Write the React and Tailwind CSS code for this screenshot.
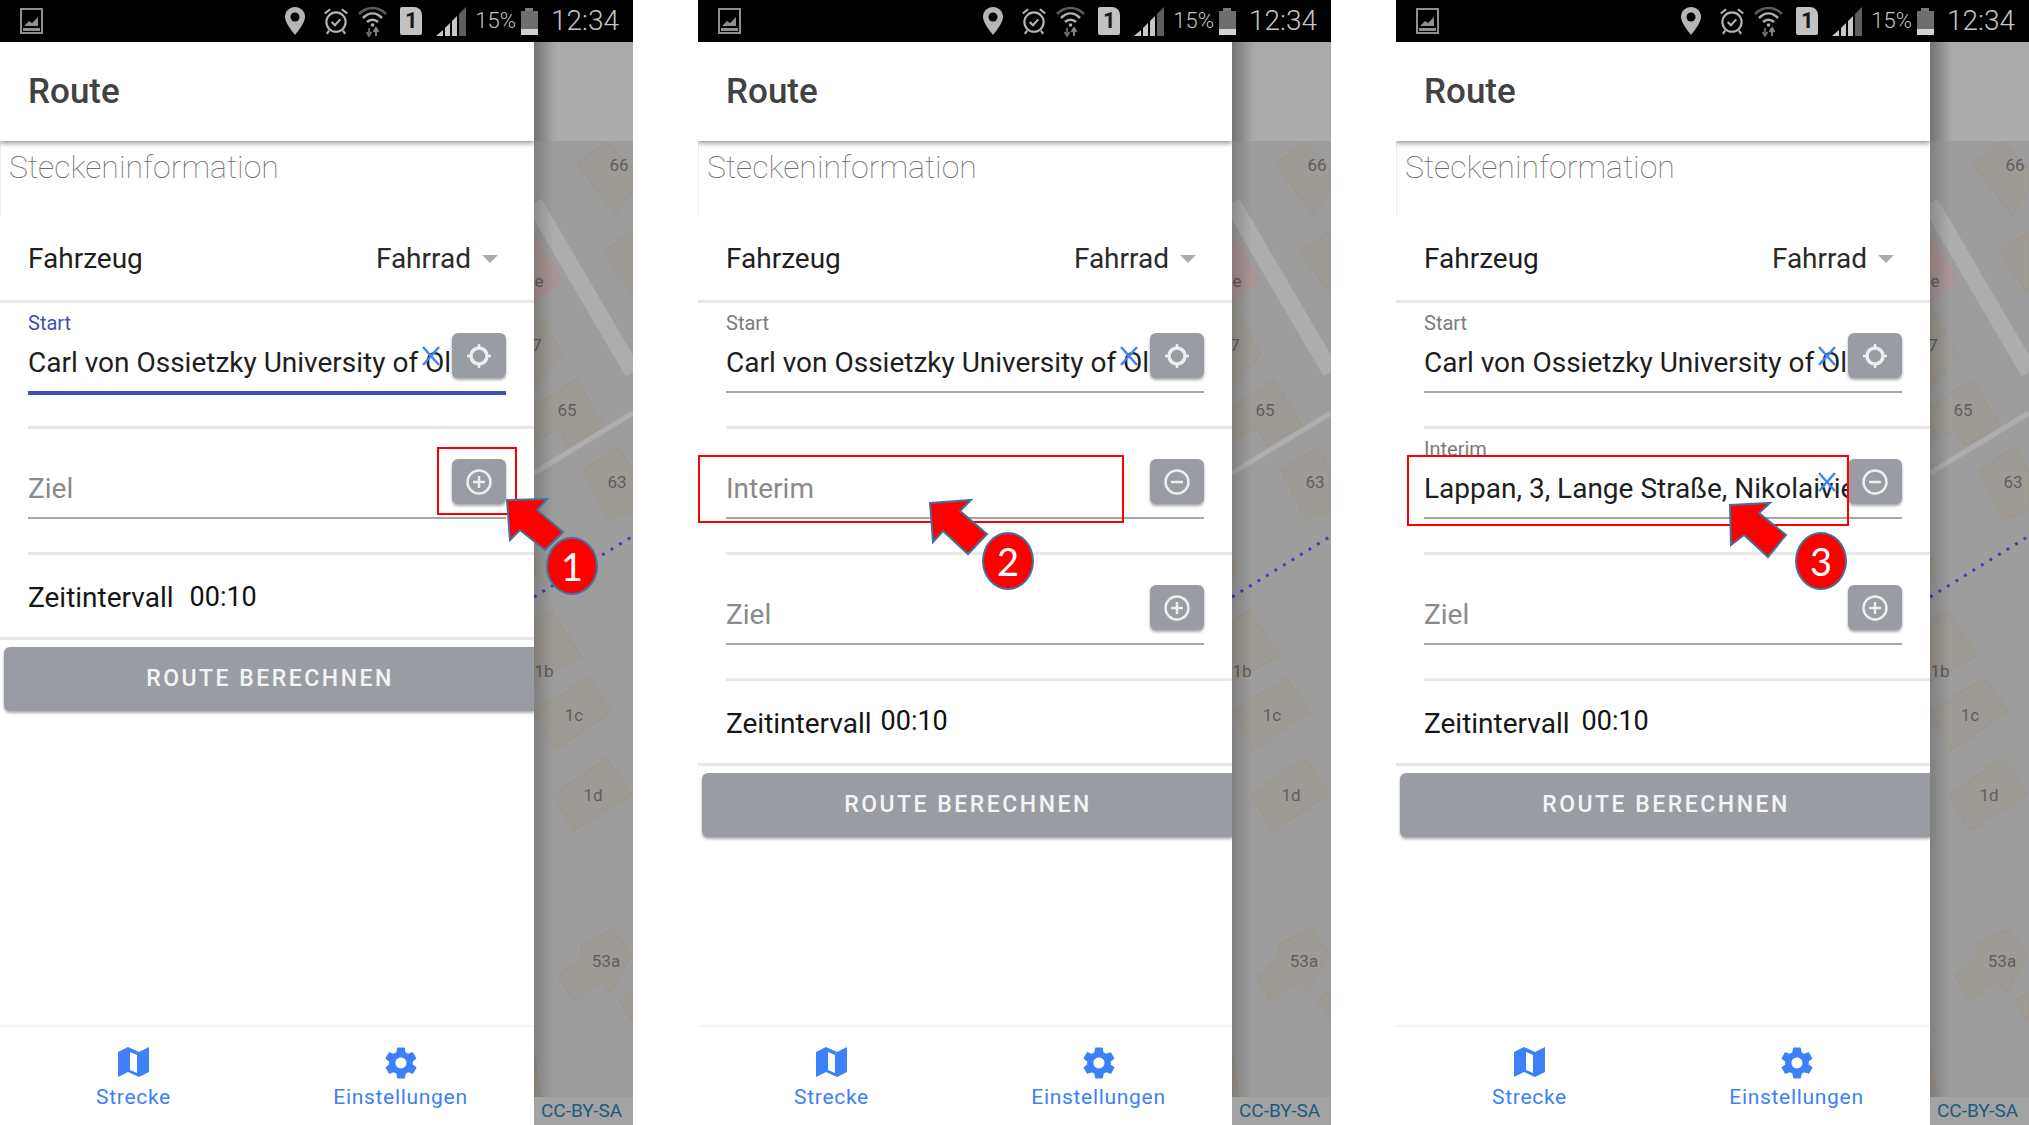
import React from "react";
import { IoMdSettings } from "react-icons/io";

const FONT = "font-[Roboto,sans-serif]";

function ImageIcon() {
  return (
    <svg width="23" height="26" viewBox="0 0 23 26" className="ml-5 shrink-0">
      <rect x="1" y="1" width="21" height="24" fill="none" stroke="#8f8f8f" strokeWidth="2" />
      <rect x="3" y="20" width="17" height="3" fill="#8f8f8f" />
      <path d="M4 18 L9 13 L12 15 L18 9 L18 18 Z" fill="#8f8f8f" />
    </svg>
  );
}

function StatusIcons() {
  return (
    <div className="ml-auto flex items-center pr-[14px] text-[#c4c4c4]">
      <svg width="20" height="28" viewBox="0 0 20 28">
        <path d="M10 0C4.5 0 0 4.4 0 9.8 0 16.5 10 28 10 28s10-11.500 10-18.200C20 4.400 15.500 0 10 0z" fill="#b5b5b5" />
        <circle cx="10" cy="10" r="4.500" fill="#000" />
      </svg>
      <svg width="26" height="30" viewBox="0 0 23 28" className="ml-[18px]" fill="none" stroke="#b5b5b5" strokeWidth="2">
        <circle cx="11.500" cy="15" r="9" />
        <path d="M7.500 15l3 3 5-5.500" />
        <path d="M1 7l5-4M22 7l-5-4M5 23l-2 3M18 23l2 3" />
      </svg>
      <svg width="29" height="32" viewBox="0 0 29 32" className="ml-[9px]" fill="none">
        <path d="M1 9C9 1 20 1 28 9" stroke="#5c5c5c" strokeWidth="2.500" />
        <path d="M5 13C11 7 18 7 24 13" stroke="#b0b0b0" strokeWidth="2.500" />
        <path d="M9 17C12 14 17 14 20 17" stroke="#b0b0b0" strokeWidth="2.500" />
        <circle cx="14.500" cy="20" r="1.800" fill="#b0b0b0" />
        <path d="M11 23v8M8.500 27l2.500 4 2.500-4" stroke="#6a6a6a" strokeWidth="1.800" />
        <path d="M18 31v-8M15.500 27l2.500-4 2.500 4" stroke="#8a8a8a" strokeWidth="1.800" />
      </svg>
      <div className="ml-[13px] flex h-[28px] w-[22px] items-center justify-center rounded-[2px] rounded-tr-[8px] bg-[#c2c2c2] text-[22px] leading-none font-bold text-[#1a1a1a]">
        1
      </div>
      <svg width="30" height="30" viewBox="0 0 30 30" className="ml-[14px]">
        <path d="M0 30L7 24V30Z" fill="#c8c8c8" />
        <path d="M9 22L14 17V30H9Z" fill="#c8c8c8" />
        <path d="M16 15L21 10V30H16Z" fill="#c8c8c8" />
        <path d="M23 8L30 1V30H23Z" fill="#5e5e5e" />
      </svg>
      <span className={`ml-[9px] text-[22px] leading-none font-light ${FONT}`}>15%</span>
      <div className="ml-[5px] flex h-[27px] w-[17px] flex-col items-center">
        <div className="h-[3px] w-[8px] bg-[#7a7a7a]" />
        <div className="h-[18px] w-full bg-[#6e6e6e]" />
        <div className="h-[6px] w-full bg-[#d2d2d2]" />
      </div>
      <span className={`ml-[13px] text-[28px] leading-none font-light ${FONT}`}>12:34</span>
    </div>
  );
}

function MapView() {
  const buildings = [
    "43,23 72,0 98,27 98,50 82,74",
    "69,111 98,90 98,153",
    "0,165 29,213 0,247",
    "0,266 42,238 70,285 35,305 25,288 0,300",
    "49,329 85,306 98,329 98,370 74,378",
    "0,414 5,427 0,436",
    "0,480 17,469 47,515 2,540 0,540",
    "0,570 54,537 78,570 22,609",
    "19,654 72,617 98,653 40,690",
    "25,835 47,816 47,803 79,788 98,813 85,835 77,853 67,840 39,860",
    "85,860 98,850 98,880",
    "0,910 7,957 0,984",
  ];
  const labels = [
    ["66", 85, 30],
    ["e", 5, 146],
    ["7", 3, 210],
    ["65", 33, 275],
    ["63", 83, 347],
    ["1b", 10, 536],
    ["1c", 40, 580],
    ["1d", 59, 660],
    ["53a", 72, 826],
  ];
  return (
    <div className="relative flex flex-1 flex-col bg-[#9d9d9d]">
      <div className="h-[99px] bg-gradient-to-r from-[#8f8f8f] to-[#ababab] to-[25%]" />
      <svg viewBox="0 0 99 984" className="block h-[984px] w-full" preserveAspectRatio="none">
        <path d="M0 62L99 231" stroke="#adadad" strokeWidth="17" />
        <path d="M0 332L99 272" stroke="#adadad" strokeWidth="5" />
        <polygon points="0,90 30,140 0,162" fill="#a89595" />
        {buildings.map((points, idx) => (
          <polygon key={idx} points={points} fill="#9e9a95" stroke="#a29484" strokeWidth="1" />
        ))}
        <path d="M0 456L99 395" stroke="#3f3fb5" strokeWidth="3" strokeDasharray="3 7" />
        {labels.map(([text, x, y]) => (
          <text key={text} x={x} y={y} textAnchor="middle" fontSize="17" fill="#5e5e5e" fontFamily="Roboto, sans-serif">
            {text}
          </text>
        ))}
      </svg>
      <div className="pointer-events-none absolute inset-y-0 left-0 w-5 bg-gradient-to-r from-[#00000030] to-transparent" />
      <div className={`absolute right-0 bottom-0 left-0 h-[28px] bg-[#a3a3a3] pl-[7px] text-[19px] leading-[28px] text-[#1b5c7c] ${FONT}`}>
        CC-BY-SA
      </div>
    </div>
  );
}

function GpsIcon() {
  return (
    <svg width="30" height="30" viewBox="0 0 30 30" fill="none" stroke="#eeeeee">
      <circle cx="15" cy="15" r="8" strokeWidth="3.500" />
      <path d="M15 3v3M15 24v3M3 15h3M24 15h3" strokeWidth="2.500" />
    </svg>
  );
}

function CircleIcon({ plus }) {
  return (
    <svg width="28" height="28" viewBox="0 0 28 28" fill="none" stroke="#eeeeee" strokeWidth="2.500">
      <circle cx="14" cy="14" r="11.500" />
      <path d="M8 14h12" />
      {plus && <path d="M14 8v12" />}
    </svg>
  );
}

function ClearX() {
  return (
    <svg width="20" height="20" viewBox="0 0 20 20" className="absolute right-[65px] top-[43px]" stroke="#3d86f5" strokeWidth="2.500">
      <path d="M2 1L18 19M18 1L2 19" />
    </svg>
  );
}

function Field({ label, value, placeholder, focused, icon }) {
  return (
    <div className="ml-7 h-[126px] border-b-[3px] border-[#e8e8e8] pr-7">
      <div className="relative">
        <div className={`box-content h-[24px] pt-[8px] text-[20px] leading-[24px] ${focused ? "text-[#3f51b5]" : "text-[#7b7b7b]"}`}>
          {label}
        </div>
        <div className={`mt-[10px] mr-[54px] h-[36px] overflow-hidden whitespace-nowrap text-[28px] leading-[36px] ${value ? "text-[#1e1e1e]" : "text-[#8a8a8a]"}`}>
          {value || placeholder}
        </div>
        <div className={`mt-[10px] ${focused ? "h-[4px] bg-[#3f51b5]" : "h-[2px] bg-[#a6a6a6]"}`} />
        {value && <ClearX />}
        <div className="absolute top-[30px] right-0 flex h-[45px] w-[54px] items-center justify-center rounded-[6px] bg-[#9a9ca3] shadow-[0_2px_3px_rgba(0,0,0,0.35)]">
          {icon === "gps" ? <GpsIcon /> : <CircleIcon plus={icon === "plus"} />}
        </div>
      </div>
    </div>
  );
}

function MapIcon() {
  return (
    <svg width="31" height="31" viewBox="0 0 31 31" fill="#3d80f7">
      <path d="M0 5L10 0 21 5 31 0V25L21 30 10 25 0 30ZM12 5V23L19 26V8Z" fillRule="evenodd" />
    </svg>
  );
}

function Phone({ fields, timeClass, annotation }) {
  return (
    <div className={`relative flex h-full w-[633px] shrink-0 flex-col ${FONT}`}>
      <div className="flex h-[42px] items-center bg-black">
        <ImageIcon />
        <StatusIcons />
      </div>
      <div className="flex flex-1">
        <div className="flex w-[534px] flex-col overflow-hidden bg-white">
          <div className="relative z-10 flex h-[99px] items-center bg-white pt-[2px] pl-7 text-[35px] font-medium text-[#424242] shadow-[0_2px_5px_rgba(0,0,0,0.45)]">
            Route
          </div>
          <div className="h-[76px] border-l border-[#eeeeee] pt-[6px] pl-2 text-[32px] leading-[40px] font-thin text-[#6b6b6b]">
            Steckeninformation
          </div>
          <div className="flex h-[86px] items-center justify-between border-b-[3px] border-[#e8e8e8] pr-9 pl-7 text-[28px] text-[#1e1e1e]">
            <span>Fahrzeug</span>
            <span className="flex items-center gap-[11px] text-[#2a2a2a]">
              Fahrrad
              <span className="h-0 w-0 border-x-[8px] border-t-[8px] border-x-transparent border-t-[#ababab]" />
            </span>
          </div>
          {fields.map((field) => (
            <Field key={field.label + field.icon} {...field} />
          ))}
          <div className="flex h-[85px] items-center border-b-[3px] border-[#e8e8e8] pt-[3px] pl-7 text-[28px] text-[#161616]">
            <span>Zeitintervall</span>
            <span className={`${timeClass} text-[27px] text-[#111111]`}>00:10</span>
          </div>
          <div className="flex-1 pt-[7px] pl-1">
            <div className="flex h-[64px] items-center justify-center rounded-l-[6px] bg-[#9a9ca3] pl-[2px] text-[23px] font-medium tracking-[2.500px] text-[#f4f4f4] shadow-[0_2px_3px_rgba(0,0,0,0.35)]">
              ROUTE BERECHNEN
            </div>
          </div>
          <div className="flex h-[100px] border-t-2 border-[#f5f5f5] text-[21px] tracking-[0.700px] text-[#3d80f7]">
            <div className="flex flex-1 flex-col items-center pt-[20px]">
              <MapIcon />
              <span className="mt-[6px] leading-[26px]">Strecke</span>
            </div>
            <div className="flex flex-1 flex-col items-center pt-[17px]">
              <IoMdSettings size={38} />
              <span className="mt-[2px] leading-[26px]">Einstellungen</span>
            </div>
          </div>
        </div>
        <MapView />
      </div>
      {annotation}
    </div>
  );
}

function Arrow({ points }) {
  return (
    <svg width="633" height="1125" className="pointer-events-none absolute top-0 left-0">
      <polygon points={points} fill="#ff0000" stroke="#41719c" strokeWidth="2" />
    </svg>
  );
}

function Badge({ className, children }) {
  return (
    <div className={`absolute flex h-[58px] w-[52px] items-center justify-center rounded-[50%] border-2 border-[#41719c] bg-[#ff0000] font-[Lato,sans-serif] text-[38px] leading-none text-white ${className}`}>
      {children}
    </div>
  );
}

const start = { label: "Start", value: "Carl von Ossietzky University of Oldenburg", icon: "gps" };

export default function App() {
  return (
    <div className="flex h-[1125px] w-[2029px] gap-[65px] overflow-hidden bg-white">
      <Phone
        fields={[
          { ...start, focused: true },
          { label: "", placeholder: "Ziel", icon: "plus" },
        ]}
        timeClass="ml-[16px]"
        annotation={
          <>
            <div className="absolute top-[447px] left-[437px] h-[68px] w-[80px] border-2 border-[#ff0000]" />
            <Arrow points="507,500 547,499 537,510 563,532 545,550 520,530 510,540" />
            <Badge className="top-[537px] left-[546px]">1</Badge>
          </>
        }
      />
      <Phone
        fields={[
          start,
          { label: "", placeholder: "Interim", icon: "minus" },
          { label: "", placeholder: "Ziel", icon: "plus" },
        ]}
        timeClass="ml-[9px] -mt-[4px]"
        annotation={
          <>
            <div className="absolute top-[455px] left-0 h-[68px] w-[426px] border-2 border-[#ff0000]" />
            <Arrow points="232,503 273,500 262,511 289,534 270,554 245,531 235,542" />
            <Badge className="top-[532px] left-[284px]">2</Badge>
          </>
        }
      />
      <Phone
        fields={[
          start,
          { label: "Interim", value: "Lappan, 3, Lange Straße, Nikolaiviertel, Oldenburg", icon: "minus" },
          { label: "", placeholder: "Ziel", icon: "plus" },
        ]}
        timeClass="ml-[12px] -mt-[4px]"
        annotation={
          <>
            <div className="absolute top-[455px] left-[11px] h-[71px] w-[442px] border-2 border-[#ff0000]" />
            <Arrow points="334,505 374,503 363,513 390,535 372,557 348,535 335,545" />
            <Badge className="top-[532px] left-[399px]">3</Badge>
          </>
        }
      />
    </div>
  );
}
